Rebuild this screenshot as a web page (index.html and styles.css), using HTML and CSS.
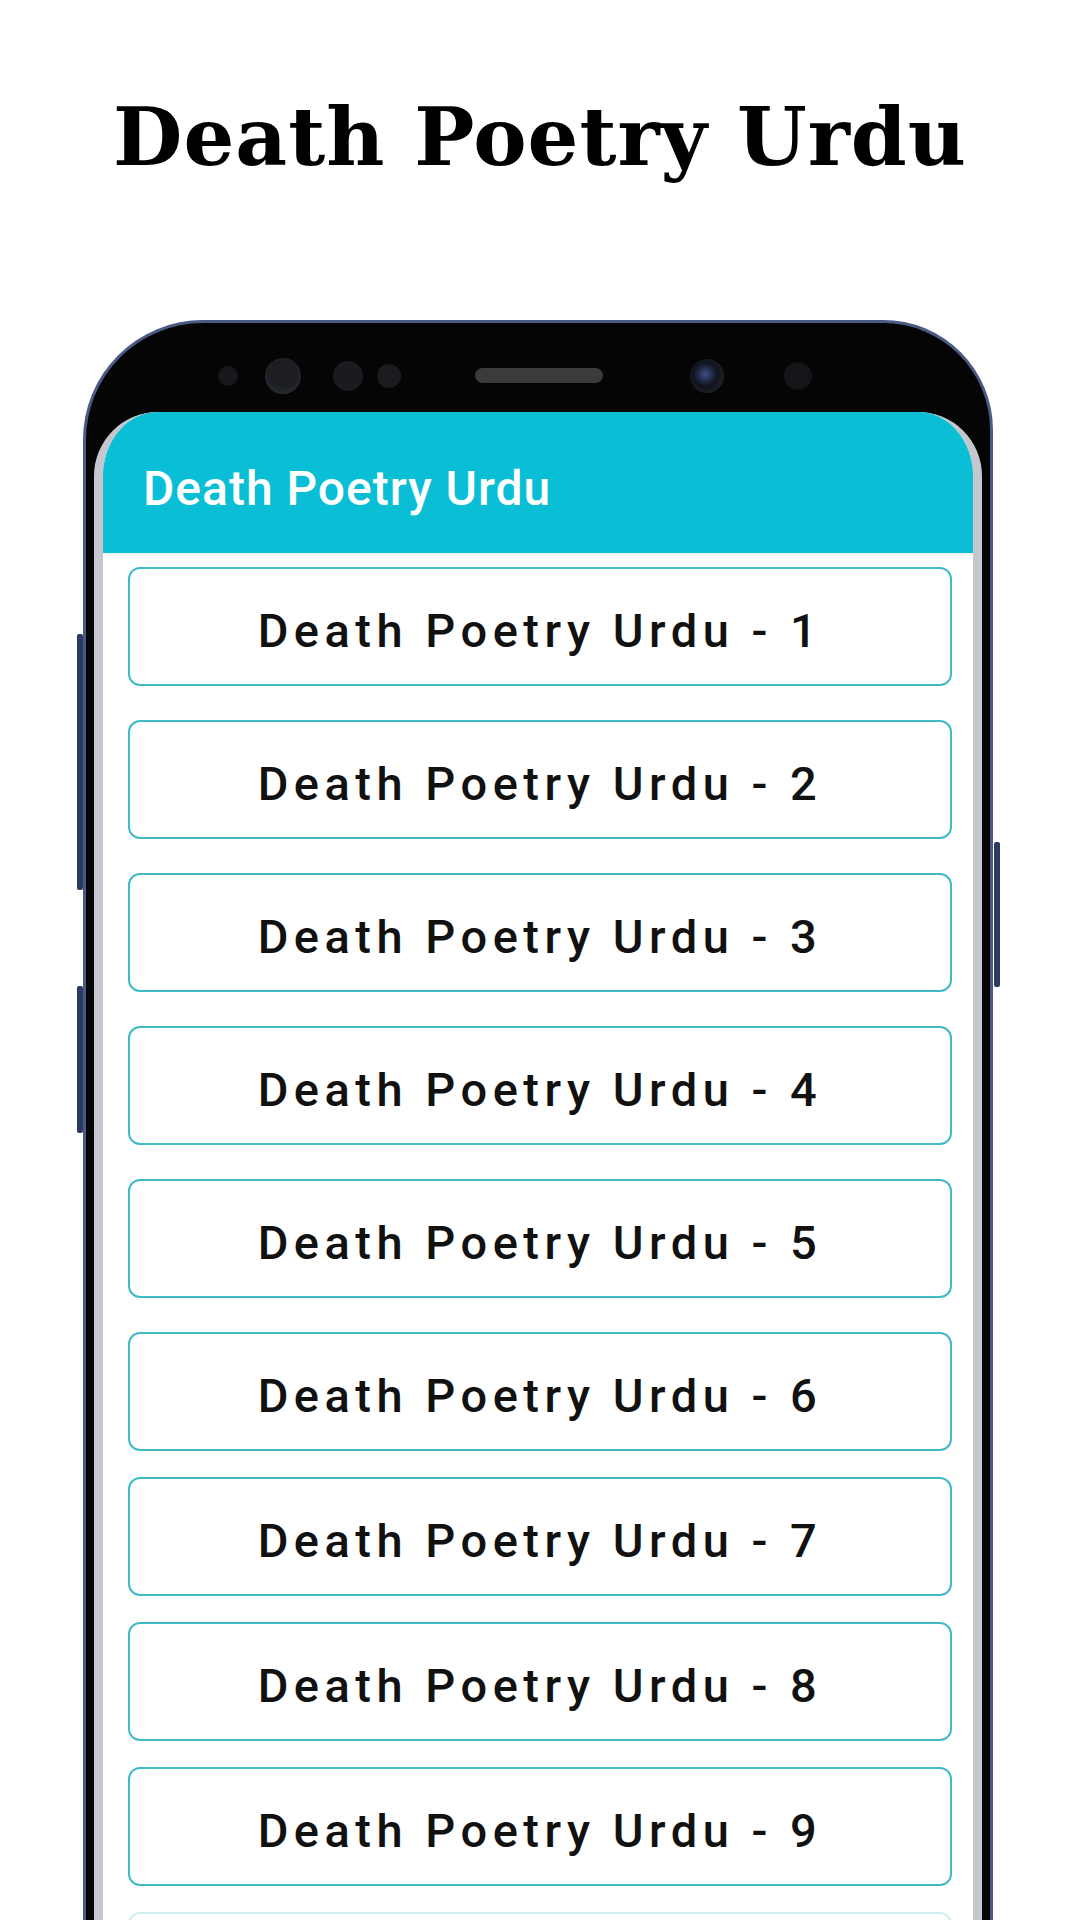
FILE: index.html
```html
<!DOCTYPE html>
<html lang="en">
<head>
  <meta charset="utf-8">
  <title>Death Poetry Urdu</title>
  <meta name="viewport" content="width=device-width, initial-scale=1">
  <link rel="stylesheet" href="styles.css">
</head>
<body>

  <h1 class="title">Death Poetry Urdu</h1>

  <!-- phone mockup -->
  <div class="phone">
    <span class="key key-left-1"></span>
    <span class="key key-left-2"></span>
    <span class="key key-right"></span>

    <div class="bezel">
      <span class="dot dot-1"></span>
      <span class="dot dot-2"></span>
      <span class="dot dot-3"></span>
      <span class="dot dot-4"></span>
      <span class="speaker"></span>
      <span class="camera"></span>
      <span class="sensor"></span>
    </div>

    <div class="screen">
      <div class="appbar">Death Poetry Urdu</div>

      <div class="list">
        <div class="group">
          <div class="card">Death Poetry Urdu - 1</div>
          <div class="card">Death Poetry Urdu - 2</div>
          <div class="card">Death Poetry Urdu - 3</div>
          <div class="card">Death Poetry Urdu - 4</div>
          <div class="card">Death Poetry Urdu - 5</div>
          <div class="card">Death Poetry Urdu - 6</div>
        </div>
        <div class="group tight">
          <div class="card">Death Poetry Urdu - 7</div>
          <div class="card">Death Poetry Urdu - 8</div>
          <div class="card">Death Poetry Urdu - 9</div>
          <div class="card faded"></div>
        </div>
      </div>
    </div>
  </div>

</body>
</html>
```

FILE: styles.css
```css
body {
  margin: 0;
  width: 1080px;
  height: 1920px;
  overflow: hidden;
  background: #ffffff;
  font-family: Roboto, "Noto Sans", sans-serif;
}

.title {
  margin: 0;
  padding-top: 90px;
  height: 94px;
  line-height: 94px;
  text-align: center;
  font-family: "DejaVu Serif", "Liberation Serif", serif;
  font-size: 80px;
  font-weight: bold;
  letter-spacing: 1px;
  color: #000000;
}

/* phone frame */
.phone {
  position: relative;
  margin: 136px 0 0 83px;
  width: 888px;
  height: 1640px;
  padding: 0 8px;
  background: #050505;
  border: 3px solid #4b5a84;
  border-bottom: none;
  border-radius: 120px 110px 0 0;
}
.key {
  position: absolute;
  width: 6px;
  background: #2c3960;
  border-radius: 2px;
}
.key-left-1 {
  left: -9px;
  top: 311px;
  height: 256px;
}
.key-left-2 {
  left: -9px;
  top: 663px;
  height: 147px;
}
.key-right {
  right: -10px;
  top: 519px;
  height: 145px;
}

.bezel {
  height: 89px;
  padding-top: 16px;
  box-sizing: border-box;
  display: flex;
  align-items: center;
}
.dot {
  border-radius: 50%;
  background: #15171b;
}
.dot-1 {
  width: 20px;
  height: 20px;
  margin-left: 124px;
}
.dot-2 {
  width: 36px;
  height: 36px;
  margin-left: 27px;
  background: #1c1e22;
  box-shadow: inset 0 -3px 6px #2a2d33;
}
.dot-3 {
  width: 30px;
  height: 30px;
  margin-left: 32px;
  background: #191b1f;
}
.dot-4 {
  width: 24px;
  height: 24px;
  margin-left: 14px;
  background: #1a1c20;
}
.speaker {
  width: 128px;
  height: 15px;
  margin-left: 74px;
  border-radius: 8px;
  background: #3a3b3d;
}
.camera {
  width: 34px;
  height: 34px;
  margin-left: 87px;
  border-radius: 50%;
  background: radial-gradient(circle at 45% 45%, #3c4f8a 0, #10131c 45%, #1d1f24 70%, #2a2c31 100%);
}
.sensor {
  width: 28px;
  height: 28px;
  margin-left: 60px;
  border-radius: 50%;
  background: #141518;
}

/* screen */
.screen {
  height: 1551px;
  background: #ffffff;
  border-left: 9px solid #c4c7cd;
  border-right: 9px solid #c4c7cd;
  border-radius: 64px 64px 0 0;
  overflow: hidden;
}
.appbar {
  height: 141px;
  padding: 48px 0 0 40px;
  box-sizing: border-box;
  background: #09bed5;
  color: #ffffff;
  font-size: 48px;
  font-weight: 500;
  letter-spacing: 1px;
  box-shadow: 0 2px 4px rgba(0, 0, 0, 0.08);
}
.list {
  padding: 14px 21px 0 25px;
}
.group {
  display: flex;
  flex-direction: column;
  gap: 34px;
}
.group.tight {
  gap: 26px;
  margin-top: 26px;
}
.card {
  height: 119px;
  padding-top: 7px;
  box-sizing: border-box;
  display: flex;
  align-items: center;
  justify-content: center;
  border: 2px solid #40bbc5;
  border-radius: 12px;
  font-size: 47px;
  font-weight: 500;
  letter-spacing: 5.5px;
  color: #111111;
}
.card.faded {
  opacity: 0.25;
}
```
